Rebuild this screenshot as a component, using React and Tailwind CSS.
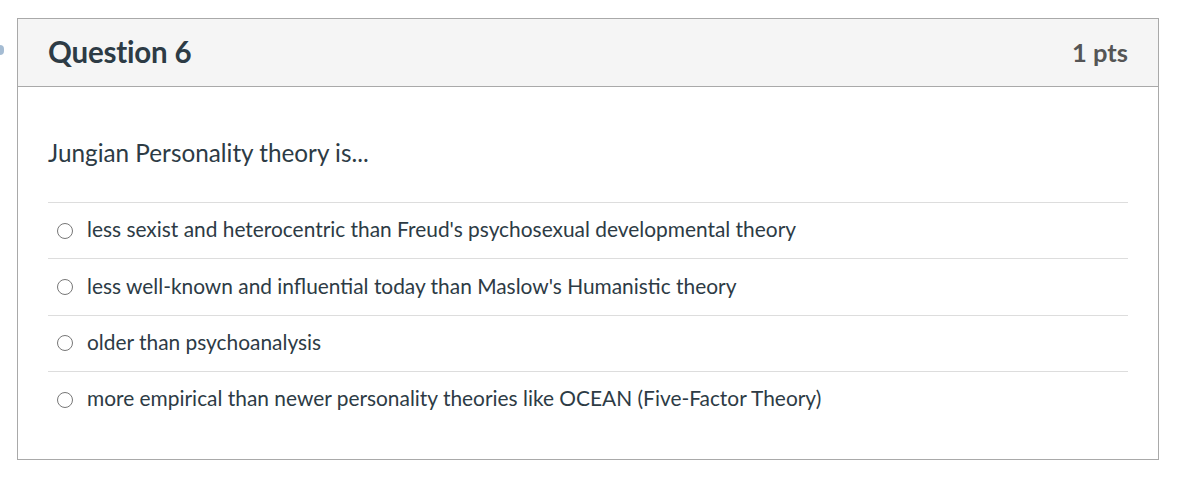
import React from "react";

const answers = [
  "less sexist and heterocentric than Freud's psychosexual developmental theory",
  "less well-known and influential today than Maslow's Humanistic theory",
  "older than psychoanalysis",
  "more empirical than newer personality theories like OCEAN (Five-Factor Theory)",
];

export default function App() {
  return (
    <div
      className="relative w-[1198px] h-[492px] bg-white pt-[18px] pl-[17px]"
      style={{ fontFamily: "Lato, 'Open Sans', sans-serif" }}
    >
      <div className="absolute left-0 top-[45px] w-[4px] h-[10px] rounded-r-full bg-[#7f9fc0] opacity-70" />
      <div className="w-[1142px] h-[442px] border border-[#a9a9a9] flex flex-col">
        <div className="h-[68px] shrink-0 bg-[#f5f5f5] border-b border-[#a9a9a9] flex items-center justify-between px-[30px]">
          <div className="text-[29.5px] font-bold text-[#2d3b45] tracking-[-0.2px]">Question 6</div>
          <div className="text-[25.5px] font-bold text-[#555555]">1 pts</div>
        </div>
        <div className="px-[30px] pt-[51px]">
          <div className="text-[24.3px] text-[#2d3b45] leading-[30px]">Jungian Personality theory is...</div>
          <div className="mt-[34px]">
            {answers.map((a, i) => (
              <div
                key={i}
                className="h-[56.4px] border-t border-[#dddddd] flex items-center pl-[9px]"
              >
                <span className="w-[16px] h-[16px] rounded-full border border-[#777] shrink-0 mr-[14px]" />
                <span className="text-[20.9px] text-[#2d3b45] leading-[28px] pb-[3px]">{a}</span>
              </div>
            ))}
          </div>
        </div>
      </div>
    </div>
  );
}
